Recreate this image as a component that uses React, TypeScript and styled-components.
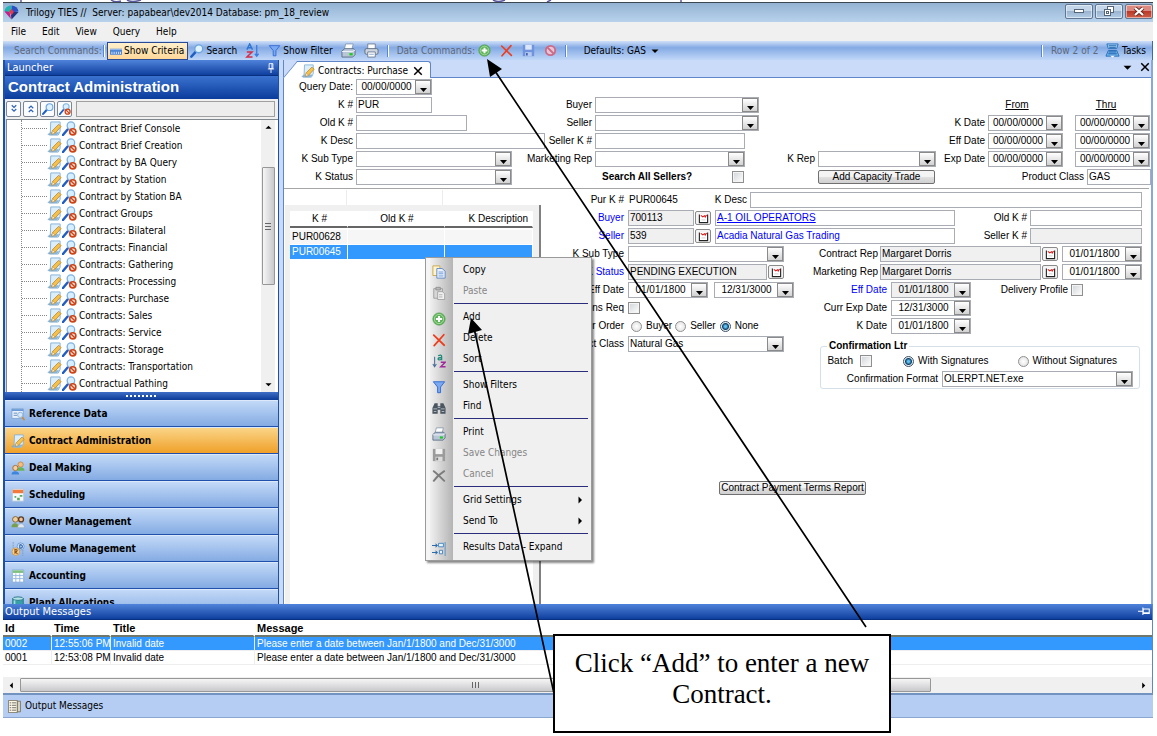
import React, { useId } from 'react';
import styled, { createGlobalStyle, css } from 'styled-components';

const UI = '"DejaVu Sans Condensed", "DejaVu Sans", Tahoma, sans-serif';
const FORM = '"Liberation Sans", Arial, sans-serif';
const SERIF = '"Liberation Serif", "Times New Roman", serif';

const Global = createGlobalStyle`
  *, *::before, *::after { box-sizing: border-box; }
  body { margin: 0; background: #fff; color: #000; font: 10px/14px ${UI}; }
  button, input, select { font: inherit; color: inherit; margin: 0; padding: 0; border-radius: 0; }
  button { background: none; border: 0; text-align: left; white-space: nowrap; }
  svg { display: block; flex: none; }
`;

/* ---------- icons ---------- */

const icons: Record<string, React.ReactNode> = {
  doc: (
    <>
      <path d="M4 1h10v10l-2 4H2.500l1-2z" fill="#dceefa" stroke="#86b2d6" />
      <path d="M1 14.500h9.500l2-2H3z" fill="#8ebfe6" stroke="#6d9fc8" strokeWidth=".6" />
      <path d="M5 14l1-4 6.500-6.500 2.500 2.500L8.500 13z" fill="#f6c14a" stroke="#b9822a" strokeWidth=".8" />
      <path d="M5 14l1-4 2.500 3z" fill="#fff0d0" stroke="#b9822a" strokeWidth=".5" />
    </>
  ),
  magNo: (
    <>
      <path d="M1 15l5-6" stroke="#1f5fc4" strokeWidth="2.600" strokeLinecap="round" />
      <circle cx="9.500" cy="5" r="4" fill="#d8efff" stroke="#7fb2e0" strokeWidth="1.400" />
      <circle cx="11.500" cy="11.500" r="3.300" fill="#fbe3dc" stroke="#cc4417" strokeWidth="1.700" />
      <path d="M9.300 9.300l4.400 4.400" stroke="#cc4417" strokeWidth="1.500" />
    </>
  ),
  mag: (
    <>
      <path d="M1.500 14.500l5-5.500" stroke="#1f5fc4" strokeWidth="2.800" strokeLinecap="round" />
      <circle cx="10" cy="5.500" r="4.500" fill="#dff2ff" stroke="#6da5dc" strokeWidth="1.500" />
    </>
  ),
  ruler: (
    <>
      <rect x="0" y="5" width="16" height="8" fill="#4d86d6" />
      <path d="M0 6h16" stroke="#a7c8f4" />
      <path d="M2.500 12V9M5.500 12V9M8.500 12V9M11.500 12V9M14 12V9" stroke="#fff" />
    </>
  ),
  sortZa: (
    <>
      <path d="M2 7l3-6 3 6M3 5h4" stroke="#2f74d0" fill="none" strokeWidth="1.500" />
      <path d="M2 9.500h5.500L2 15h6" stroke="#d22d4a" fill="none" strokeWidth="1.600" />
      <path d="M12.500 2v12M10.500 11.500l2 2.500 2-2.500" stroke="#3f7be0" fill="none" strokeWidth="1.400" />
    </>
  ),
  sortAz: (
    <>
      <path d="M3 3v11M1 11.500L3 14.500l2-3" stroke="#4b6d9c" fill="none" strokeWidth="1.200" />
      <path d="M7 2q4-2 4 1v4M11 4Q7 4 7 5.800T11 6" stroke="#1d8a7a" fill="none" strokeWidth="1.500" />
      <path d="M10 9.500h5L10 14.500h5.500" stroke="#a02a9c" fill="none" strokeWidth="1.600" />
    </>
  ),
  funnel: <path d="M1.500 2h13L9.800 8v6.500H6.400V8z" fill="#7aa9f2" stroke="#2c63cf" strokeLinejoin="round" />,
  printer: (
    <>
      <path d="M5 1h8l-1.500 6H3.500z" fill="#fff" stroke="#7b8ea6" strokeWidth=".8" />
      <path d="M1 8.500L4 6h9.500L15 8v4.500L12.500 15H1z" fill="#b9c6d8" stroke="#54657c" strokeWidth=".9" />
      <path d="M1 9h11.500L15 7.500" stroke="#f2f6fa" fill="none" />
      <path d="M9 12h3.500" stroke="#1ecb1e" strokeWidth="2.500" />
    </>
  ),
  printer2: (
    <>
      <path d="M4 1h8v6H4z" fill="#fff" stroke="#6f7f96" />
      <rect x="1" y="6" width="14" height="6" rx="1.500" fill="#cdd5e0" stroke="#5c6c82" />
      <path d="M4 9.500h8V15H4z" fill="#fff" stroke="#6f7f96" />
      <path d="M5.500 12h5" stroke="#8aa6d0" />
    </>
  ),
  add: (
    <>
      <circle cx="8" cy="8" r="7" fill="#5cb457" stroke="#4d9c49" strokeWidth=".8" />
      <circle cx="8" cy="8" r="5.300" fill="none" stroke="#c4e6bf" strokeWidth=".8" />
      <path d="M8 4.500v7M4.500 8h7" stroke="#fff" strokeWidth="2.400" />
    </>
  ),
  del: <path d="M2 2.500l12 11.500M13.500 2L2.500 14.500" stroke="#ee3d1c" strokeWidth="2" strokeLinecap="round" />,
  save: (
    <>
      <path d="M1 1h14v14H1z" fill="#6f93dd" />
      <path d="M4 1h8v6H4z" fill="#dbe6fa" />
      <path d="M4 10h8v5H4z" fill="#b6c9f0" />
      <path d="M5 11h2v3H5z" fill="#3d5fa8" />
    </>
  ),
  saveGray: (
    <>
      <path d="M1 1h14v14H1z" fill="#9b9b9b" />
      <path d="M4 1h8v6H4z" fill="#f1f1f1" />
      <path d="M4 10h8v5H4z" fill="#dcdcdc" />
      <path d="M5 11h2v3H5z" fill="#777" />
    </>
  ),
  no: (
    <>
      <circle cx="8" cy="8" r="5.800" fill="#e6c5d8" stroke="#cc6a86" strokeWidth="2.200" />
      <path d="M4 4l8 8" stroke="#cc6a86" strokeWidth="2.200" />
    </>
  ),
  tasks: (
    <>
      <path d="M2 1h12l-1.500 5H3.500z" fill="#9fd0f5" stroke="#2a6fb8" />
      <path d="M1 14l2.500-6h9L15 14z" fill="#6fb2ec" stroke="#2a6fb8" />
      <path d="M4 3h8M4.500 5h7M4 9.500h8M3.500 11.500h9" stroke="#1d5da8" />
      <path d="M5.500 13.500h5l-2.500 2z" fill="#fff" />
    </>
  ),
  copy: (
    <>
      <path d="M1 1h8v11H1z" fill="#fff4cf" stroke="#c7a345" />
      <path d="M5.500 4h6L15 7v8H5.500z" fill="#e8f1fd" stroke="#5e83bd" />
      <path d="M7.500 8h5.500M7.500 10h5.500M7.500 12.500h5.500" stroke="#6f97d6" />
    </>
  ),
  paste: (
    <>
      <path d="M2 3h10v11H2z" fill="#d6d6d6" stroke="#9d9d9d" />
      <path d="M4.500 1.500h5v3h-5z" fill="#bbb" stroke="#8e8e8e" />
      <path d="M6.500 6.500H12l2.500 2.500v6.500h-8z" fill="#f1f1f1" stroke="#9d9d9d" />
      <path d="M8 10h4M8 12.500h4" stroke="#aaa" />
    </>
  ),
  find: (
    <>
      <path d="M3 2.500h3.500V6h3V2.500H13l2.500 5.500v6.500H9.500V10h-3v4.500h-6V8z" fill="#4a5560" />
      <path d="M1.500 9h4.500M10 9h4.500M2 12h3M11 12h3M6.500 7.500h3" stroke="#b9c3cd" />
    </>
  ),
  cancel: <path d="M2 2.500c4 3 8 7 12 11M14 2.500c-5 3-9 7-12 11" stroke="#7d7d7d" strokeWidth="2.200" fill="none" strokeLinecap="round" />,
  expand: (
    <>
      <path d="M0 4h6M4 2l2 2-2 2M0 12h6M4 10l2 2-2 2" stroke="#2d6ca8" fill="none" strokeWidth="1.200" />
      <path d="M7.500 1.500H13v4H7.500zM8.500 9.500H12v4H8.500z" stroke="#3f7fb8" fill="#e8f3fb" />
      <path d="M15 0v16" stroke="#4f8fc4" />
    </>
  ),
  refData: (
    <>
      <path d="M1 2h13v11H1z" fill="#e9f2fb" stroke="#7ba2d0" />
      <path d="M1 3.500h13" stroke="#5f93d4" strokeWidth="2" />
      <path d="M3 7h4M3 9.500h4" stroke="#5b83bd" />
      <circle cx="10.500" cy="9" r="3" fill="#d3e8f8" stroke="#8fb0d3" />
      <path d="M12.500 11.500l3 3.500" stroke="#c98d3a" strokeWidth="1.800" />
    </>
  ),
  deal: (
    <>
      <circle cx="11" cy="4" r="3" fill="#f3bd7c" stroke="#c27c2b" strokeWidth=".8" />
      <path d="M7 11c0-5 8-5 8.500 0z" fill="#64b45a" />
      <circle cx="5" cy="8" r="3" fill="#f5cf9f" stroke="#a5672b" strokeWidth="1" />
      <path d="M.5 15.500c0-5 8.500-5 9 0z" fill="#3d86dc" />
    </>
  ),
  sched: (
    <>
      <path d="M1.500 1h13v14h-13z" fill="#f7fafc" stroke="#b4c6dc" />
      <path d="M2 2h12v4H2z" fill="#f07b3c" />
      <path d="M4 9h2v2H4zM10 8h3v2h-3zM7 11h3v3H7z" fill="#59ab5e" />
    </>
  ),
  owner: (
    <>
      <circle cx="5" cy="5" r="3.200" fill="#efd09e" stroke="#7a5a2c" />
      <path d="M.5 14c0-6 8-6 8.500 0z" fill="#78a04c" />
      <circle cx="11.500" cy="5" r="2.800" fill="#f0c29a" stroke="#5b3b21" strokeWidth="1.500" />
      <path d="M7.500 14.500c0-6 8-6 8 0z" fill="#dfe8f2" stroke="#8d9db0" strokeWidth=".6" />
    </>
  ),
  volume: (
    <>
      <path d="M2.500 0v7M13.500 9v7" stroke="#7e96b8" strokeDasharray="2 1" />
      <circle cx="11" cy="5" r="4" fill="#cfe3f8" stroke="#5c8cc9" strokeWidth=".8" />
      <circle cx="5.500" cy="11" r="4.300" fill="#f8d38e" stroke="#c98d3a" strokeWidth=".8" />
      <path d="M10 3v4q3 0 3-2t-3-2" stroke="#2a62b0" fill="none" strokeWidth="1.200" />
      <path d="M4.500 13.500v-5q3 0 2.500 1.500T4.500 11l3 2.500" stroke="#8a4d12" fill="none" strokeWidth="1.200" />
    </>
  ),
  account: (
    <>
      <path d="M1.500 1h13v14h-13z" fill="#fff" stroke="#86add9" />
      <path d="M2 3h12" stroke="#7fc07f" strokeWidth="3" />
      <path d="M2 7.500h12M2 11h12M5.500 5v10M10 5v10" stroke="#8fb3df" />
    </>
  ),
  plant: (
    <>
      <path d="M2 3v11c0 2 12 2 12 0V3z" fill="#37a0a8" stroke="#1f6f86" />
      <ellipse cx="8" cy="3" rx="6" ry="2" fill="#b5e3e4" stroke="#1f6f86" />
      <path d="M4 5v9" stroke="#9fdcdc" strokeWidth="2" />
    </>
  ),
  down2: <path d="M5 3l3 3 3-3M5 8l3 3 3-3" stroke="#2f62b4" fill="none" strokeWidth="1.600" />,
  up2: <path d="M5 7l3-3 3 3M5 12l3-3 3 3" stroke="#2f62b4" fill="none" strokeWidth="1.600" />,
  list: (
    <>
      <path d="M.5.5h11v15H.5z" fill="#fdf8e6" stroke="#6e6a58" />
      <path d="M11.500 1.500h4v13h-4z" fill="#d6d2bc" stroke="#6e6a58" />
      <path d="M2 3.500h2M5 3.500h5M2 6.500h2M5 6.500h5M2 9.500h2M5 9.500h5M2 12.500h2M5 12.500h5" stroke="#4f4f4f" />
    </>
  ),
  lookup: (
    <>
      <path d="M2 2v12h12V2" fill="#fff" stroke="#222" strokeWidth="1.600" />
      <path d="M4 3.500l3 2 2-1M9.500 3l1 3 2-3" stroke="#d42020" fill="none" strokeWidth="1.600" />
      <path d="M5 10h6" stroke="#bbb" />
    </>
  ),
  logo: (
    <>
      <path d="M8 .5A8 7 0 0 1 15.500 7L8 8z" fill="#2c4fc4" />
      <path d="M15.500 7.500L8 15.500l-1-8z" fill="#24357e" />
      <path d="M7.500 15L.5 7l5-2z" fill="#c41e8a" />
      <path d="M.5 6.500C1 3 4 .5 7.500.5L8 8z" fill="#20b4b0" />
      <path d="M8 4l2.500 3.500L8 11 5.500 7z" fill="#e43a4c" />
    </>
  ),
  pin: <path d="M5 1h6v8H5zM3 9.500h10M8 10v6M9.500 1v8" stroke="#fff" fill="none" strokeWidth="1.400" />,
  pinSide: <path d="M7 4h8v6H7zM6.500 2v10M0 7h6.500M7 9h8" stroke="#fff" fill="none" strokeWidth="1.400" />,
  close: <path d="M3 3l10 10M13 3L3 13" stroke="#000" strokeWidth="2" />,
  caret: <path d="M1 5h14l-7 7z" fill="#000" />,
  caretR: <path d="M5 1v14l7-7z" fill="#000" />,
};

const Icon = ({ name, size = 14 }: { name: string; size?: number }) => (
  <svg width={size} height={size} viewBox="0 0 16 16" aria-hidden="true">{icons[name]}</svg>
);

/* ---------- window frame ---------- */

const Page = styled.div`position: relative; min-height: 100vh; padding: 0 4px 0 3px; overflow: hidden;`;
const PageTop = styled.div`height: 2px; overflow: hidden;`;
const TitleBar = styled.header`
  display: flex; align-items: center; gap: 7px; height: 20px; padding-left: 1px;
  border-top: 1px solid #3c4650; background: linear-gradient(#94b3d3, #b8d2ec);
`;
const Title = styled.h1`flex: 1; margin: 0; font-size: 10px; font-weight: 400; white-space: pre;`;
const WindowButtons = styled.div`display: flex; gap: 2px; align-self: flex-start; padding-top: 1px;`;
const WindowButton = styled.button<{ $danger?: boolean }>`
  display: grid; place-items: center; width: 28px; height: 15px;
  border: 1px solid #5f7590; border-radius: 2px; box-shadow: inset 0 0 0 1px #ffffff80;
  background: ${p => p.$danger ? 'linear-gradient(#dc8a80 45%, #b93a2a 50%, #cf5e48)' : 'linear-gradient(#c3d6ea 45%, #9bb5d1 50%, #b4cde6)'};
`;
const MenuBar = styled.nav`
  display: flex; gap: 16px; height: 19px; padding: 0 8px; align-items: center; background: #f0f0f0;
`;
const Toolbar = styled.div`
  display: flex; align-items: center; gap: 8px; height: 19px; padding: 0 6px 0 11px;
  background: linear-gradient(#cfe0f8, #84aae4 35%, #c0d7f8); border-right: 1px solid #3f68b0;
`;
const ToolLabel = styled.span<{ $w: number }>`width: ${p => p.$w}px; flex: none; color: #5f6878; white-space: nowrap;`;
const ToolSep = styled.i`width: 2px; height: 12px; flex: none; border-left: 1px solid #5c86cc; border-right: 1px solid #fff;`;
const Tool = styled.button<{ $on?: boolean }>`
  display: flex; align-items: center; gap: 2px; height: 18px;
  ${p => p.$on && css`margin: 0 -6px; padding: 0 3px 0 2px; border: 1px solid #2b4a94; background: linear-gradient(#fff0cc, #ffd79a);`}
`;
const DataTools = styled.div`display: flex; gap: 9px;`;
const Defaults = styled.button`display: flex; align-items: center; gap: 5px; margin-left: 9px;`;
const Spacer = styled.span`flex: 1;`;
const Body = styled.div`display: flex; background: #c9dbf8;`;

/* ---------- launcher ---------- */

const Launcher = styled.aside`width: 276px; flex: none; border: solid #1c4fae; border-width: 0 1px 0 2px;`;
const PaneHeader = styled.div`
  display: flex; align-items: center; justify-content: space-between; height: 16px; padding: 0 2px;
  color: #fff; font-size: 11px; background: linear-gradient(#4f83da, #0f3f9e); border-bottom: 1px solid #093080;
`;
const LauncherTitle = styled.h2`
  margin: 0; height: 23px; padding-left: 3px; color: #fff; font: 700 15px/22px ${FORM};
  background: linear-gradient(#3a72cf, #0b3c9c);
`;
const SearchRow = styled.div`display: flex; gap: 2px; height: 20px; padding: 2px 3px 2px 1px; background: #f0f0f0;`;
const SmallButton = styled.button`
  display: grid; place-items: center; width: 15px; height: 16px; border: 1px solid #7d8694; border-radius: 2px; background: #fafcff;
`;
const TreeSearch = styled.input`flex: 1; min-width: 0; margin-left: 2px; border: 1px solid #a0a0a0; background: #ededed;`;
const TreeBox = styled.div`display: flex; margin-left: 1px; border-left: 1px solid #808890; border-top: 1px solid #808890; background: #fff;`;
const Tree = styled.ul`flex: 1; margin: 0 0 0 14px; padding: 0; list-style: none; border-left: 1px dotted #888;`;
const TreeItem = styled.li`
  display: flex; align-items: center; height: 17px;
  &::before { content: ''; width: 25px; border-top: 1px dotted #888; }
`;
const TreeText = styled.span`padding-left: 2px;`;
const VScroll = styled.div`
  display: flex; flex-direction: column; align-items: center; justify-content: space-between;
  width: 14px; margin-right: 3px; padding: 4px 0; background: #f0f0f0;
`;
const VThumb = styled.div`
  display: grid; place-items: center; width: 13px; height: 118px; margin-bottom: 60px;
  border: 1px solid #979797; border-radius: 1px; background: linear-gradient(90deg, #f6f6f6, #c9c9cd);
  &::before { content: ''; width: 6px; height: 7px; background: repeating-linear-gradient(#666 0 1px, transparent 1px 3px); }
`;
const Splitter = styled.div`
  display: grid; place-items: center; height: 8px; background: linear-gradient(#3f6fc6, #0c3b98);
  &::before { content: ''; width: 32px; height: 2px; background: repeating-linear-gradient(90deg, #fff 0 2px, transparent 2px 4px); }
`;
const NavList = styled.nav`max-height: 204px; overflow: hidden;`;
const NavItem = styled.button<{ $active?: boolean }>`
  display: flex; align-items: center; gap: 4px; width: 100%; height: 27px; padding: 2px 0 0 6px; font-weight: 700;
  border-bottom: 1px solid #1f50ac; box-shadow: inset 0 1px #dce9fb;
  background: ${p => p.$active ? 'linear-gradient(#fbd78c, #f0a029)' : 'linear-gradient(#c5dbf8, #84abe3)'};
`;

/* ---------- form controls ---------- */

const box = css`height: 16px; border: 1px solid #a9acb2; background: #fff;`;
const TextBox = styled.input<{ $w?: number; $ro?: boolean }>`
  ${box} flex: ${p => p.$w ? 'none' : 1}; width: ${p => p.$w ? `${p.$w}px` : 'auto'}; min-width: 0; padding: 0 0 1px 1px;
  background: ${p => p.$ro ? '#f0f0f0' : '#fff'};
`;
const ComboBox = styled.span<{ $w: number; $ro?: boolean }>`
  ${box} display: flex; flex: none; width: ${p => p.$w}px; background: ${p => p.$ro ? '#f0f0f0' : '#fff'};
  select, input { flex: 1; min-width: 0; padding: 0 0 0 1px; border: 0; background: none; appearance: none; }
  input { text-align: center; }
`;
const arrow = css`
  display: flex; align-items: flex-end; justify-content: center; width: 16px; flex: none;
  border: 1px solid #8a8a8a; background: linear-gradient(#fff, #d2d2d2); pointer-events: none;
`;
const ArrowCap = styled.span`${arrow}`;
const ArrowButton = styled.button`${arrow}`;
const Down = () => <svg width="7" height="6" viewBox="0 0 7 6" aria-hidden="true"><path d="M0 1h7L3.500 5z" fill="#000" /></svg>;
const LookupButton = styled.button`
  display: grid; place-items: center; width: 16px; height: 14px; margin-left: 1px; flex: none;
  border: 1px solid #8a8a8a; border-radius: 2px; background: #f4f4f4;
`;
const Check = styled.input`
  appearance: none; width: 12px; height: 12px; flex: none; border: 1px solid #8f8f8f;
  box-shadow: inset 0 0 0 1px #f4f4f4; background: linear-gradient(135deg, #cfd3d8, #fff);
`;
const Radio = styled.input`
  appearance: none; width: 11px; height: 11px; flex: none; border: 1px solid #8f8f8f; border-radius: 50%;
  background: radial-gradient(#fff, #dcdcdc);
  &:checked { border-color: #3c5268; background: radial-gradient(#5cc0f0 0 1px, #0f4268 3px, #e8eef2 4px); }
`;
const PushButton = styled.button<{ $w: number }>`
  width: ${p => p.$w}px; height: 14px; border: 1px solid #707070; border-radius: 2px; text-align: center; line-height: 12px;
  background: linear-gradient(#f4f4f4 45%, #dedede 55%, #d0d0d0);
`;
const Row = styled.div<{ $indent?: number }>`
  display: flex; align-items: center; height: 18px; padding-left: ${p => p.$indent ?? 0}px; white-space: nowrap;
`;
const Label = styled.label<{ $w: number; $gap?: number; $blue?: boolean }>`
  width: ${p => p.$w}px; margin-right: ${p => p.$gap ?? 3}px; flex: none; text-align: right;
  color: ${p => p.$blue ? '#00f' : '#000'};
`;
const Gap = styled.span<{ $w: number }>`width: ${p => p.$w}px; flex: none;`;
const Output = styled.output<{ $w: number }>`width: ${p => p.$w}px; flex: none; padding-left: 1px;`;
const Choice = styled.label<{ $gap: number }>`display: flex; align-items: center; gap: 4px; margin-right: ${p => p.$gap}px;`;
const LinkBox = styled.span<{ $plain?: boolean }>`
  ${box} width: 240px; flex: none; padding-left: 1px; line-height: 13px;
  a { color: #00f; text-decoration: ${p => p.$plain ? 'none' : 'underline'}; }
`;

type FieldProps = { label: string; lw: number; w?: number; value?: string; gap?: number; blue?: boolean; ro?: boolean };
const TextField = ({ label, lw, w, value = '', gap, ro }: FieldProps) => {
  const id = useId();
  return <><Label htmlFor={id} $w={lw} $gap={gap}>{label}</Label><TextBox id={id} $w={w} $ro={ro} readOnly={ro} defaultValue={value} /></>;
};
const ComboField = ({ label, lw, w = 75, value = '', gap }: FieldProps) => {
  const id = useId();
  return (
    <>
      <Label htmlFor={id} $w={lw} $gap={gap}>{label}</Label>
      <ComboBox $w={w}><select id={id} defaultValue={value}><option>{value}</option></select><ArrowCap><Down /></ArrowCap></ComboBox>
    </>
  );
};
const DateBox = ({ id, name, value, w = 75, ro }: { id?: string; name: string; value: string; w?: number; ro?: boolean }) => (
  <ComboBox $w={w} $ro={ro}>
    <input id={id} aria-label={name} defaultValue={value} />
    <ArrowButton aria-label={`Pick ${name}`}><Down /></ArrowButton>
  </ComboBox>
);
const DateField = ({ label, lw, w, value = '', gap, blue, ro }: FieldProps) => {
  const id = useId();
  return <><Label htmlFor={id} $w={lw} $gap={gap} $blue={blue}>{label}</Label><DateBox id={id} name={label} value={value} w={w} ro={ro} /></>;
};
const LookupField = ({ label, lw, w, value = '', gap, blue }: FieldProps) => {
  const id = useId();
  return (
    <>
      <Label htmlFor={id} $w={lw} $gap={gap} $blue={blue}>{label}</Label>
      <TextBox id={id} $w={w} $ro readOnly defaultValue={value} />
      <LookupButton aria-label={`Look up ${label}`}><Icon name="lookup" size={11} /></LookupButton>
    </>
  );
};
const CheckField = ({ label, lw, gap }: FieldProps) => {
  const id = useId();
  return <><Label htmlFor={id} $w={lw} $gap={gap}>{label}</Label><Check id={id} type="checkbox" /></>;
};

/* ---------- main pane ---------- */

const Main = styled.main`
  display: flex; flex-direction: column; flex: 1; min-width: 0; margin-left: 4px;
  border-left: 1px solid #5f86c8; border-right: 2px solid #86a8dc; font-family: ${FORM};
`;
const TabStrip = styled.div`
  display: flex; align-items: flex-end; height: 18px; padding-left: 13px; background: #c9dbf8; border-bottom: 1px solid #5f86c8;
  font-family: ${UI};
`;
const Tab = styled.div`
  position: relative; display: flex; align-items: center; gap: 3px; width: 134px; height: 17px; margin-bottom: -1px; padding: 1px 6px 0 4px;
  background: #fff; border: 1px solid #5f86c8; border-width: 1px 1px 0 0; border-radius: 0 3px 0 0;
  &::before {
    content: ''; position: absolute; z-index: 0; left: -7px; top: -1px; width: 14px; height: 17px;
    background: #fff; border: solid #5f86c8; border-width: 1px 0 0 1px; transform: skewX(-40deg);
  }
  > * { position: relative; }
`;
const TabName = styled.span`flex: 1; white-space: nowrap;`;
const TabTools = styled.div`display: flex; gap: 7px; margin-left: auto; padding: 0 0 4px;`;
const Form = styled.div`flex: 1; display: flex; flex-direction: column; background: #fff;`;
const Query = styled.section`display: flex; border-bottom: 1px solid #a6a6a6; margin-right: 2px; padding-bottom: 2px;`;
const Col = styled.div<{ $w?: number; $end?: boolean }>`
  ${p => p.$w ? `width: ${p.$w}px; flex: none;` : ''} ${p => p.$end ? 'margin-left: auto; margin-right: -2px;' : ''}
`;
const DateHead = styled.span<{ $w: number }>`width: ${p => p.$w}px; text-align: center; text-decoration: underline;`;
const Strong = styled.label<{ $w: number }>`width: ${p => p.$w}px; padding-left: 7px; font-weight: 700;`;

const Lower = styled.section`display: flex; flex: 1;`;
const Results = styled.div`display: flex; flex-direction: column; width: 256px; flex: none; margin: 1px 0 0 1px;`;
const FilterStrip = styled.div`
  display: grid; grid-template-columns: 62px 96px 1fr; height: 15px;
  span { border-right: 1px solid #ececec; }
`;
const ResultsFrame = styled.div`flex: 1; border: solid #f0f0f0; border-width: 6px 6px 0 5px; box-shadow: 2px 0 #808080; margin-right: 2px;`;
const ResultsTable = styled.table`
  width: 100%; table-layout: fixed; border-collapse: separate; border-spacing: 0;
  th, td { height: 14px; padding: 0 0 0 2px; border-right: 1px solid #fff; line-height: 14px; }
  th { height: 17px; font-weight: 400; text-align: center; border-bottom: 2px solid #666; }
  th:last-child { text-align: right; padding-right: 4px; }
  td { background: #f6f6f6; }
  tr.gap td { height: 2px; background: #fff; line-height: 1px; }
`;
const ResultRow = styled.tr<{ $sel?: boolean }>`
  td { ${p => p.$sel && 'background: #3399ff; color: #fff;'} border-bottom: 1px solid #fff; height: 15px; }
`;
const Detail = styled.div`flex: 1; min-width: 0; padding: 2px 9px 0 0;`;
const DetailCols = styled.div`display: flex;`;
const Confirmation = styled.fieldset`
  width: 320px; margin: 5px 0 0 24px; padding: 0; border: 1px solid #d5dfe8; border-radius: 3px; min-width: 0;
  legend { margin-left: 6px; padding: 0 2px; font-weight: 700; line-height: 12px; }
`;
const ReportRow = styled.div`padding: 92px 0 0 178px;`;

/* ---------- output pane ---------- */

const Messages = styled.section`border-right: 1px solid #5f86c8; background: #fff;`;
const MessageTable = styled.table`
  width: 100%; table-layout: fixed; border-collapse: separate; border-spacing: 0; font-family: ${FORM};
  th { height: 17px; padding: 0 0 0 2px; text-align: left; font-size: 11px; line-height: 14px; border-bottom: 2px solid #70786c; border-right: 2px solid #fff; }
  td { height: 14px; padding: 0 0 0 2px; line-height: 13px; border-right: 1px solid #eee; border-bottom: 1px solid #eee; white-space: nowrap; }
  th:last-child, td:last-child { border-right: 0; }
`;
const MessageRow = styled.tr<{ $sel?: boolean }>`${p => p.$sel && 'background: #3399ff; color: #fff;'}`;
const HScroll = styled.div`
  display: flex; align-items: center; gap: 5px; height: 16px; margin-top: 12px; padding: 0 5px; background: #f0f0f0;
`;
const HThumb = styled.div`
  display: grid; place-items: center; width: 80%; height: 14px; border: 1px solid #979797; border-radius: 1px;
  background: linear-gradient(#f6f6f6, #c9c9cd);
  &::before { content: ''; width: 7px; height: 6px; background: repeating-linear-gradient(90deg, #666 0 1px, transparent 1px 3px); }
`;
const Rot = styled.span<{ $d: number }>`display: flex; rotate: ${p => p.$d}deg;`;
const StatusBar = styled.footer`
  display: flex; align-items: center; gap: 4px; height: 25px; padding-left: 5px; background: #b6cdf3;
  border-top: 2px solid #7292c0; border-bottom: 1px solid #8aa8cf;
`;

/* ---------- layers over the window ---------- */

const ContextMenu = styled.ul`
  position: absolute; left: 425px; top: 257px; width: 167px; margin: 0; padding: 1px 3px 3px; list-style: none;
  border: 1px solid #9a9a9a; box-shadow: 2px 2px 2px #0007;
  background: linear-gradient(90deg, #f5f5f5 4px, #f0f0f0 4px, #b4b4b4 27px, #f0f0f0 27px);
`;
const MenuEntry = styled.button`
  display: grid; grid-template-columns: 22px 1fr 12px; column-gap: 9px; align-items: center; width: 100%; height: 21px; padding-left: 3px;
  svg { margin-top: 5px; }
  svg:last-child { margin: 0; }
  &:disabled { color: #868686; }
`;
const MenuRule = styled.li`height: 5px; margin-left: 25px; padding-top: 2px; &::before { content: ''; display: block; border-top: 1px solid #2c2c7c; }`;
const Arrows = styled.svg`position: absolute; left: 0; top: 0; pointer-events: none;`;
const Callout = styled.div`
  position: absolute; left: 553px; top: 634px; width: 338px; height: 99px; padding: 12px 16px;
  border: 2px solid #000; background: #fff; text-align: center; font: 27px/31px ${SERIF};
`;

const treeItems = [
  'Contract Brief Console', 'Contract Brief Creation', 'Contract by BA Query', 'Contract by Station', 'Contract by Station BA',
  'Contract Groups', 'Contracts: Bilateral', 'Contracts: Financial', 'Contracts: Gathering', 'Contracts: Processing',
  'Contracts: Purchase', 'Contracts: Sales', 'Contracts: Service', 'Contracts: Storage', 'Contracts: Transportation', 'Contractual Pathing',
];
const navItems = [
  ['refData', 'Reference Data'], ['doc', 'Contract Administration'], ['deal', 'Deal Making'], ['sched', 'Scheduling'],
  ['owner', 'Owner Management'], ['volume', 'Volume Management'], ['account', 'Accounting'], ['plant', 'Plant Allocations'],
];
const menu: (null | { text: string; icon?: string; off?: boolean; sub?: boolean })[] = [
  { text: 'Copy', icon: 'copy' }, { text: 'Paste', icon: 'paste', off: true }, null,
  { text: 'Add', icon: 'add' }, { text: 'Delete', icon: 'del' }, { text: 'Sort', icon: 'sortAz' }, null,
  { text: 'Show Filters', icon: 'funnel' }, { text: 'Find', icon: 'find' }, null,
  { text: 'Print', icon: 'printer' }, { text: 'Save Changes', icon: 'saveGray', off: true }, { text: 'Cancel', icon: 'cancel', off: true }, null,
  { text: 'Grid Settings', sub: true }, { text: 'Send To', sub: true }, null,
  { text: 'Results Data - Expand', icon: 'expand' },
];
const messages = [
  ['0002', '12:55:06 PM', 'Invalid date', 'Please enter a date between Jan/1/1800 and Dec/31/3000'],
  ['0001', '12:53:08 PM', 'Invalid date', 'Please enter a date between Jan/1/1800 and Dec/31/3000'],
];

const LauncherPane = () => (
  <Launcher>
    <PaneHeader>Launcher<Icon name="pin" size={10} /></PaneHeader>
    <LauncherTitle>Contract Administration</LauncherTitle>
    <SearchRow>
      {[['down2', 'Expand all'], ['up2', 'Collapse all'], ['mag', 'Find'], ['magNo', 'Clear find']].map(([i, t]) => (
        <SmallButton key={i} aria-label={t}><Icon name={i} size={12} /></SmallButton>
      ))}
      <TreeSearch aria-label="Search launcher" />
    </SearchRow>
    <TreeBox>
      <Tree>
        {treeItems.map(t => <TreeItem key={t}><Icon name="doc" size={15} /><Icon name="magNo" size={15} /><TreeText>{t}</TreeText></TreeItem>)}
      </Tree>
      <VScroll><Rot $d={180}><Icon name="caret" size={7} /></Rot><VThumb /><Icon name="caret" size={7} /></VScroll>
    </TreeBox>
    <Splitter />
    <NavList>
      {navItems.map(([i, t]) => <NavItem key={t} $active={i === 'doc'}><Icon name={i} />{t}</NavItem>)}
    </NavList>
  </Launcher>
);

const QueryPane = () => {
  const all = useId();
  return (
    <Query>
      <Col $w={231}>
        <Row><DateField label="Query Date:" lw={69} w={76} value="00/00/0000" /></Row>
        <Row><TextField label="K #" lw={69} w={76} value="PUR" /></Row>
        <Row><TextField label="Old K #" lw={69} w={111} /></Row>
        <Row><TextField label="K Desc" lw={69} w={189} /></Row>
        <Row><ComboField label="K Sub Type" lw={69} w={156} /></Row>
        <Row><ComboField label="K Status" lw={69} w={156} /></Row>
      </Col>
      <Col $w={245}>
        <Row />
        <Row><ComboField label="Buyer" lw={77} w={164} /></Row>
        <Row><ComboField label="Seller" lw={77} w={164} /></Row>
        <Row><TextField label="Seller K #" lw={77} w={150} /></Row>
        <Row><ComboField label="Marketing Rep" lw={77} w={150} /></Row>
        <Row $indent={80}><Strong htmlFor={all} $w={137}>Search All Sellers?</Strong><Check id={all} type="checkbox" /></Row>
      </Col>
      <Col>
        <Row /><Row /><Row /><Row />
        <Row><ComboField label="K Rep" lw={55} w={118} /></Row>
        <Row $indent={58}><PushButton $w={117}>Add Capacity Trade</PushButton></Row>
      </Col>
      <Col $end>
        <Row />
        <Row $indent={44}><DateHead $w={58}>From</DateHead><Gap $w={31} /><DateHead $w={58}>Thru</DateHead></Row>
        {['K Date', 'Eff Date', 'Exp Date'].map(t => (
          <Row key={t}><DateField label={t} lw={41} w={75} value="00/00/0000" /><Gap $w={12} /><DateBox name={`${t} thru`} value="00/00/0000" w={75} /><Gap $w={1} /></Row>
        ))}
        <Row><TextField label="Product Class" lw={140} w={64} value="GAS" /></Row>
      </Col>
    </Query>
  );
};

const ResultsPane = () => (
  <Results>
    <FilterStrip><span /><span /></FilterStrip>
    <ResultsFrame>
      <ResultsTable>
        <colgroup><col width="58" /><col width="97" /><col /></colgroup>
        <thead><tr><th>K #</th><th>Old K #</th><th>K Description</th></tr></thead>
        <tbody>
          <tr className="gap"><td colSpan={3} /></tr>
          <ResultRow><td>PUR00628</td><td /><td /></ResultRow>
          <ResultRow $sel><td>PUR00645</td><td /><td /></ResultRow>
        </tbody>
      </ResultsTable>
    </ResultsFrame>
  </Results>
);

const DetailPane = () => (
  <Detail>
    <Row><Label as="span" $w={83} $gap={4}>Pur K #</Label><Output $w={86}>PUR00645</Output><TextField label="K Desc" lw={33} /></Row>
    <Row>
      <LookupField label="Buyer" lw={83} gap={4} w={66} value="700113" blue /><Gap $w={4} />
      <LinkBox><a href="#buyer">A-1 OIL OPERATORS</a></LinkBox><Spacer /><TextField label="Old K #" lw={60} w={112} />
    </Row>
    <Row>
      <LookupField label="Seller" lw={83} gap={4} w={66} value="539" blue /><Gap $w={4} />
      <LinkBox $plain><a href="#seller">Acadia Natural Gas Trading</a></LinkBox><Spacer /><TextField label="Seller K #" lw={60} w={112} ro />
    </Row>
    <DetailCols>
      <Col $w={255}>
        <Row><ComboField label="K Sub Type" lw={83} gap={4} w={156} /></Row>
        <Row><LookupField label="K Status" lw={83} gap={4} w={139} value="PENDING EXECUTION" blue /></Row>
        <Row><DateField label="Eff Date" lw={83} gap={4} w={80} value="01/01/1800" /><Gap $w={6} /><DateBox name="Exp Date" w={80} value="12/31/3000" /></Row>
        <Row><CheckField label="Options Req" lw={83} gap={4} /></Row>
        <Row role="radiogroup" aria-label="Our Order">
          <Label as="span" $w={83} $gap={7}>Our Order</Label>
          <Choice $gap={3}><Radio type="radio" name="order" />Buyer</Choice>
          <Choice $gap={4}><Radio type="radio" name="order" />Seller</Choice>
          <Choice $gap={0}><Radio type="radio" name="order" defaultChecked />None</Choice>
        </Row>
        <Row><ComboField label="Product Class" lw={83} gap={4} w={156} value="Natural Gas" /></Row>
      </Col>
      <Col>
        <Row><LookupField label="Contract Rep" lw={82} gap={2} w={161} value="Margaret Dorris" /><Gap $w={4} /><DateBox name="Contract Rep date" w={80} value="01/01/1800" /></Row>
        <Row><LookupField label="Marketing Rep" lw={82} gap={2} w={161} value="Margaret Dorris" /><Gap $w={4} /><DateBox name="Marketing Rep date" w={80} value="01/01/1800" /></Row>
        <Row><DateField label="Eff Date" lw={91} gap={4} w={80} value="01/01/1800" blue ro /><CheckField label="Delivery Profile" lw={97} /></Row>
        <Row><DateField label="Curr Exp Date" lw={91} gap={4} w={80} value="12/31/3000" /></Row>
        <Row><DateField label="K Date" lw={91} gap={4} w={80} value="01/01/1800" /></Row>
        <Confirmation>
          <legend>Confirmation Ltr</legend>
          <Row>
            <CheckField label="Batch" lw={32} gap={7} /><Gap $w={31} />
            <Choice $gap={29}><Radio type="radio" name="sig" defaultChecked />With Signatures</Choice>
            <Choice $gap={0}><Radio type="radio" name="sig" />Without Signatures</Choice>
          </Row>
          <Row><ComboField label="Confirmation Format" lw={117} gap={4} w={191} value="OLERPT.NET.exe" /></Row>
        </Confirmation>
      </Col>
    </DetailCols>
    <ReportRow><PushButton $w={147}>Contract Payment Terms Report</PushButton></ReportRow>
  </Detail>
);

export default function App() {
  return (
    <Page>
      <Global />
      <PageTop>
        <svg width="720" height="2" viewBox="0 0 720 2" aria-hidden="true">
          <path d="M18 0v2M108 0q4 3 10 1M124 0q5 3 14 0M490 0q5 3 12 0M548 0l-4 2M678 0v2" stroke="#5b5a9c" fill="none" strokeWidth="1.500" />
        </svg>
      </PageTop>
      <TitleBar>
        <Icon name="logo" size={15} />
        <Title>{'Trilogy TIES //  Server: papabear\\dev2014 Database: pm_18_review'}</Title>
        <WindowButtons>
          <WindowButton aria-label="Minimize"><svg width="10" height="5"><rect x=".5" y=".5" width="9" height="3" fill="#fff" stroke="#55657a" /></svg></WindowButton>
          <WindowButton aria-label="Restore"><svg width="12" height="11" fill="#fff" stroke="#55657a"><rect x="4.500" y=".5" width="6" height="6" /><rect x="1.500" y="3.500" width="6" height="6" /><rect x="3.500" y="5.500" width="2" height="2" /></svg></WindowButton>
          <WindowButton $danger aria-label="Close"><svg width="12" height="9"><path d="M2 1l8 7M10 1L2 8" stroke="#6b2a20" strokeWidth="4" /><path d="M2 1l8 7M10 1L2 8" stroke="#fff" strokeWidth="2.200" /></svg></WindowButton>
        </WindowButtons>
      </TitleBar>
      <MenuBar>{['File', 'Edit', 'View', 'Query', 'Help'].map(t => <button key={t}>{t}</button>)}</MenuBar>
      <Toolbar role="toolbar">
        <ToolLabel $w={81}>Search Commands:</ToolLabel>
        <ToolSep />
        <Tool $on><Icon name="ruler" size={12} />Show Criteria</Tool>
        <Tool><Icon name="mag" />Search</Tool>
        <Tool aria-label="Sort"><Icon name="sortZa" size={15} /></Tool>
        <Tool><Icon name="funnel" size={13} />Show Filter</Tool>
        <Tool aria-label="Print"><Icon name="printer" size={15} /></Tool>
        <Tool aria-label="Print preview"><Icon name="printer2" size={15} /></Tool>
        <ToolSep />
        <ToolLabel $w={73}>Data Commands:</ToolLabel>
        <DataTools>
          <Tool aria-label="Add"><Icon name="add" size={13} /></Tool>
          <Tool aria-label="Delete"><Icon name="del" size={13} /></Tool>
          <Tool aria-label="Save"><Icon name="save" size={13} /></Tool>
          <Tool aria-label="Cancel"><Icon name="no" size={13} /></Tool>
        </DataTools>
        <ToolSep />
        <Defaults>Defaults: GAS<Icon name="caret" size={8} /></Defaults>
        <Spacer />
        <ToolSep />
        <ToolLabel $w={46}>Row 2 of 2</ToolLabel>
        <Tool><Icon name="tasks" size={15} />Tasks</Tool>
      </Toolbar>
      <Body>
        <LauncherPane />
        <Main>
          <TabStrip>
            <Tab><Icon name="doc" /><TabName>Contracts: Purchase</TabName><button aria-label="Close tab"><Icon name="close" size={12} /></button></Tab>
            <TabTools><button aria-label="Tab list"><Icon name="caret" size={9} /></button><button aria-label="Close"><Icon name="close" size={12} /></button></TabTools>
          </TabStrip>
          <Form>
            <QueryPane />
            <Lower><ResultsPane /><DetailPane /></Lower>
          </Form>
        </Main>
      </Body>
      <Messages>
        <PaneHeader>Output Messages<Icon name="pinSide" size={12} /></PaneHeader>
        <MessageTable>
          <colgroup><col width="49" /><col width="59" /><col width="144" /><col /></colgroup>
          <thead><tr>{['Id', 'Time', 'Title', 'Message'].map(t => <th key={t}>{t}</th>)}</tr></thead>
          <tbody>{messages.map((m, i) => <MessageRow key={m[0]} $sel={i === 0}>{m.map((c, j) => <td key={j}>{c}</td>)}</MessageRow>)}</tbody>
        </MessageTable>
        <HScroll><Rot $d={180}><Icon name="caretR" size={7} /></Rot><HThumb /><Spacer /><Icon name="caretR" size={7} /></HScroll>
      </Messages>
      <StatusBar><Icon name="list" size={13} />Output Messages</StatusBar>

      <ContextMenu>
        {menu.map((m, i) => m
          ? <li key={i}><MenuEntry disabled={m.off}>{m.icon ? <Icon name={m.icon} /> : <i />}<span>{m.text}</span>{m.sub && <Icon name="caretR" size={8} />}</MenuEntry></li>
          : <MenuRule key={i} role="separator" />)}
      </ContextMenu>
      <Arrows width="900" height="720" viewBox="0 0 900 720" aria-hidden="true">
        <path d="M866 627L493 68M555 698L474 328" stroke="#000" strokeWidth="1.700" />
        <path d="M487 59l15 10-12 8zM471 318l-3 16 14-4z" fill="#000" />
      </Arrows>
      <Callout>Click “Add” to enter a new Contract.</Callout>
    </Page>
  );
}
